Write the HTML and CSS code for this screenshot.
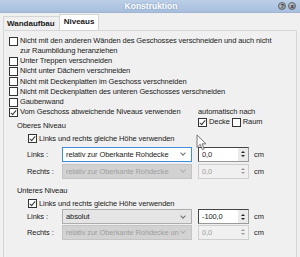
FILE: index.html
```html
<!DOCTYPE html>
<html lang="de">
<head>
    <meta charset="UTF-8">
    <title>Konstruktion</title>
    <link rel="stylesheet" href="styles.css">
</head>
<body>
    <div class="window">
        <div class="titlebar">
            <div class="title">Konstruktion</div>
            <div class="title-buttons">
                <span class="title-btn">?</span>
                <span class="title-btn">x</span>
            </div>
        </div>

        <div class="tabs">
            <div class="tab">Wandaufbau</div>
            <div class="tab active">Niveaus</div>
        </div>

        <div class="page">
            <div class="option option-wide">
                <span class="box"></span>
                <span>Nicht mit den anderen Wänden des Geschosses verschneiden und auch nicht<br>zur Raumbildung heranziehen</span>
            </div>
            <div class="option"><span class="box"></span><span>Unter Treppen verschneiden</span></div>
            <div class="option"><span class="box"></span><span>Nicht unter Dächern verschneiden</span></div>
            <div class="option"><span class="box"></span><span>Nicht mit Deckenplatten im Geschoss verschneiden</span></div>
            <div class="option"><span class="box"></span><span>Nicht mit Deckenplatten des unteren Geschosses verschneiden</span></div>
            <div class="option"><span class="box"></span><span>Gaubenwand</span></div>

            <div class="levels-row">
                <div class="option"><span class="box checked"></span><span>Vom Geschoss abweichende Niveaus verwenden</span></div>
                <div class="auto">
                    <div>automatisch nach</div>
                    <div class="auto-options">
                        <div class="option"><span class="box checked"></span><span>Decke</span></div>
                        <div class="option"><span class="box"></span><span>Raum</span></div>
                    </div>
                </div>
            </div>

            <div class="level upper">
                <div class="level-title">Oberes Niveau</div>
                <div class="option same"><span class="box checked"></span><span>Links und rechts gleiche Höhe verwenden</span></div>
                <div class="field-row">
                    <span class="field-label">Links :</span>
                    <div class="combo focused"><span>relativ zur Oberkante Rohdecke</span><span class="chevron"></span></div>
                    <div class="spin focused"><span class="spin-value">0,0</span><span class="spin-buttons"><i class="up"></i><i class="down"></i></span></div>
                    <span class="unit">cm</span>
                </div>
                <div class="field-row">
                    <span class="field-label">Rechts :</span>
                    <div class="combo disabled"><span>relativ zur Oberkante Rohdecke</span><span class="chevron"></span></div>
                    <div class="spin disabled"><span class="spin-value">0,0</span><span class="spin-buttons"><i class="up"></i><i class="down"></i></span></div>
                    <span class="unit">cm</span>
                </div>
            </div>

            <div class="level lower">
                <div class="level-title">Unteres Niveau</div>
                <div class="option same"><span class="box checked"></span><span>Links und rechts gleiche Höhe verwenden</span></div>
                <div class="field-row">
                    <span class="field-label">Links :</span>
                    <div class="combo"><span>absolut</span><span class="chevron"></span></div>
                    <div class="spin"><span class="spin-value">-100,0</span><span class="spin-buttons"><i class="up"></i><i class="down"></i></span></div>
                    <span class="unit">cm</span>
                </div>
                <div class="field-row">
                    <span class="field-label">Rechts :</span>
                    <div class="combo disabled"><span>relativ zur Oberkante Rohdecke un</span><span class="chevron"></span></div>
                    <div class="spin disabled"><span class="spin-value">0,0</span><span class="spin-buttons"><i class="up"></i><i class="down"></i></span></div>
                    <span class="unit">cm</span>
                </div>
            </div>
        </div>

        <svg class="cursor" width="11" height="17" viewBox="0 0 12 19">
            <path d="M1 1 L1 15 L4.5 11.5 L7 17.5 L9 16.6 L6.6 11 L11 11 Z" fill="#fff" fill-opacity="0.8" stroke="#666" stroke-width="1"/>
        </svg>
    </div>
</body>
</html>
```

FILE: styles.css
```css
:root {
    --win-bg: #f0f0f0;
    --border: #d5d5d5;
    --text: #1a1a1a;
    --muted: #a0a0a0;
    --focus: #3c8fdc;
}

body {
    margin: 0;
    font-family: 'Liberation Sans', Arial, sans-serif;
    font-size: 7.5px;
    letter-spacing: -0.1px;
    color: var(--text);
    background-color: var(--win-bg);
    overflow: hidden;
}

.window {
    position: relative;
    width: 300px;
    height: 257px;
    display: flex;
    flex-direction: column;
    background-color: var(--win-bg);
}

.titlebar {
    flex: none;
    height: 12px;
    display: flex;
    align-items: center;
    background: linear-gradient(#bccfe7, #a7bedd);
    border-bottom: 1px solid #9fb4d2;
}

.title {
    flex: 1;
    text-align: center;
    padding-left: 24px;
    color: #fff;
    font-weight: 700;
    font-size: 8.5px;
    letter-spacing: 0;
    text-shadow: 0 0 2px rgba(80, 110, 150, 0.6);
}

.title-buttons {
    display: flex;
    gap: 2px;
    padding-right: 4px;
}

.title-btn {
    width: 8px;
    height: 8px;
    border-radius: 50%;
    background: radial-gradient(circle at 40% 35%, #c8ccd2, #7d838b);
    border: 1px solid #5e646c;
    box-sizing: border-box;
    font-size: 6px;
    line-height: 6px;
    font-weight: 700;
    text-align: center;
    color: #1d2126;
}

.tabs {
    flex: none;
    display: flex;
    align-items: flex-end;
    height: 17px;
    padding-left: 3px;
}

.tab {
    height: 13px;
    line-height: 13px;
    padding: 0 4px 0 3px;
    font-weight: 700;
    font-size: 8px;
    letter-spacing: 0;
    border: 1px solid var(--border);
    border-bottom: none;
    background-color: var(--win-bg);
}

.tab.active {
    height: 15px;
    line-height: 14px;
    padding: 0 4px;
    margin-left: -1px;
    background-color: #fff;
}

.page {
    flex: 1;
    margin: 0 3px;
    border: 1px solid var(--border);
    border-bottom: none;
    border-radius: 2px 2px 0 0;
    padding: 5px 0 0 5px;
}

.option {
    display: flex;
    align-items: flex-start;
    gap: 2px;
    line-height: 9.5px;
    min-height: 10.3px;
    white-space: nowrap;
}

.option-wide {
    min-height: 19.5px;
    margin-bottom: 0.5px;
}

.box {
    flex: none;
    position: relative;
    width: 9px;
    height: 9px;
    margin-top: 0.5px;
    box-sizing: border-box;
    border: 1px solid #333;
    background-color: #fff;
}

.box.checked::after {
    content: "";
    position: absolute;
    left: 2px;
    top: 0;
    width: 2px;
    height: 5px;
    border: solid #333;
    border-width: 0 1px 1px 0;
    transform: rotate(40deg);
}

.levels-row {
    display: flex;
    align-items: flex-start;
    height: 13.5px;
}

.levels-row > .option {
    width: 189px;
}

.auto {
    line-height: 9.5px;
}

.auto-options {
    display: flex;
    gap: 2px;
    padding-top: 0.5px;
}

.level {
    padding-left: 8px;
}

.level-title {
    line-height: 10px;
    height: 13px;
}

.option.same {
    margin-left: 11px;
    height: 13px;
}

.field-row {
    display: flex;
    align-items: flex-start;
    height: 17px;
    margin-left: 10px;
}

.lower {
    margin-top: 5px;
}

.lower .option.same {
    height: 10px;
}

.lower .field-row {
    height: 15.5px;
}

.field-label {
    width: 35px;
    line-height: 15px;
}

.combo {
    width: 130px;
    height: 15px;
    box-sizing: border-box;
    display: flex;
    align-items: center;
    justify-content: space-between;
    padding: 0 6px 0 3px;
    border: 1px solid #adadad;
    background-color: #e5e5e5;
    white-space: nowrap;
    overflow: hidden;
}

.combo.focused {
    border-color: var(--focus);
    background-color: #fff;
}

.combo.disabled {
    border-color: #c4c4c4;
    background-color: #d2d2d2;
    color: var(--muted);
}

.chevron {
    flex: none;
    width: 3px;
    height: 3px;
    margin-top: -2px;
    border: solid #707070;
    border-width: 0 1px 1px 0;
    transform: rotate(45deg);
}

.combo.disabled .chevron {
    border-color: #b0b0b0;
}

.spin {
    width: 51px;
    height: 15px;
    margin-left: 6px;
    box-sizing: border-box;
    display: flex;
    border: 1px solid #9a9a9a;
    border-top-color: #444;
    border-left-color: #444;
    background-color: #fff;
}

.spin-value {
    flex: 1;
    padding-left: 3px;
    line-height: 13px;
}

.spin-buttons {
    width: 10px;
    display: flex;
    flex-direction: column;
    justify-content: center;
    align-items: center;
    gap: 2px;
    background-color: #eaeaea;
}

.spin-buttons i {
    width: 0;
    height: 0;
    border-left: 2px solid transparent;
    border-right: 2px solid transparent;
}

.spin-buttons .up {
    border-bottom: 2px solid #222;
}

.spin-buttons .down {
    border-top: 2px solid #222;
}

.spin.disabled {
    border-color: #cfcfcf;
    background-color: var(--win-bg);
    color: var(--muted);
}

.spin.disabled .spin-buttons {
    background-color: var(--win-bg);
}

.spin.disabled .spin-buttons .up {
    border-bottom-color: #9a9a9a;
}

.spin.disabled .spin-buttons .down {
    border-top-color: #9a9a9a;
}

.unit {
    margin-left: 5px;
    line-height: 15px;
}

.cursor {
    position: absolute;
    left: 196px;
    top: 134px;
}
```
